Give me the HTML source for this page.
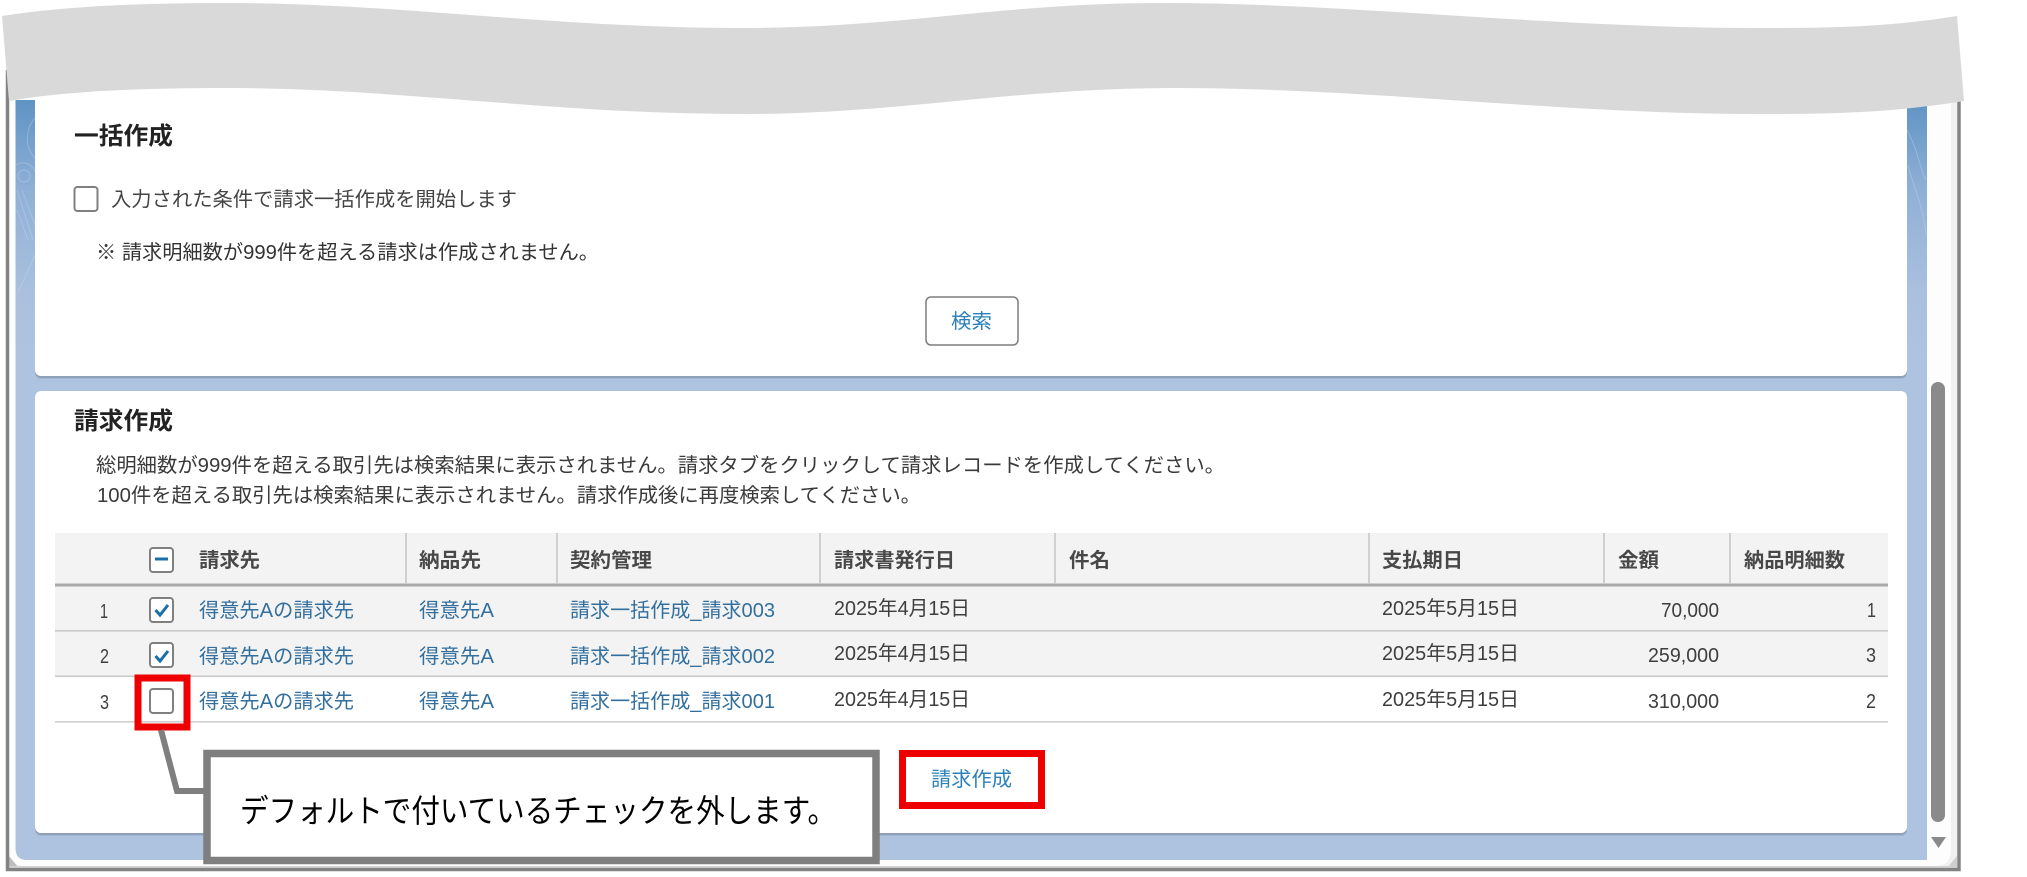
<!DOCTYPE html>
<html lang="ja">
<head>
<meta charset="utf-8">
<title>請求作成</title>
<style>
html,body{margin:0;padding:0;background:#fff;width:2027px;height:877px;overflow:hidden}
svg{display:block}
text{font-family:"Liberation Sans","Noto Sans CJK JP",sans-serif}
.t{font-size:20px;fill:#444}
.h{font-size:20px;font-weight:700;fill:#484848}
.l{font-size:20px;fill:#336f9e}
.d{font-size:20px;fill:#3e3e3e}
.ti{font-size:24px;font-weight:700;fill:#222}
.box{fill:#fff;stroke:#808080;stroke-width:2}
.sep{stroke:#c4c4c4;stroke-width:1.5}
</style>
</head>
<body>
<svg width="2027" height="877" viewBox="0 0 2027 877" xmlns="http://www.w3.org/2000/svg">
<defs>
<linearGradient id="bg" gradientUnits="userSpaceOnUse" x1="0" y1="100" x2="0" y2="861">
<stop offset="0" stop-color="#5f93c4"/>
<stop offset="0.118" stop-color="#8fb0d6"/>
<stop offset="0.25" stop-color="#a9c0de"/>
<stop offset="0.33" stop-color="#aec3df"/>
<stop offset="1" stop-color="#aec3df"/>
</linearGradient>
</defs>
<rect width="2027" height="877" fill="#fff"/>

<!-- window -->
<rect x="9" y="70" width="1948" height="797" fill="#f1f1f1"/>
<path d="M9,70 H1951 V850 Q1951,866 1935,866 H25 Q9,866 9,850 Z" fill="#fdfdfd"/>
<path d="M9,867 L9,856 L18,867 Z" fill="#bdbdbd"/>
<path d="M1957,867 L1957,856 L1948,867 Z" fill="#cfcfcf"/>
<rect x="9" y="866" width="1948" height="1.5" fill="#d2d2d2"/>
<path d="M7.5,70 V869.5 H1959 V70" fill="none" stroke="#838383" stroke-width="3.5"/>
<path d="M15.5,100 H1927 V860 H27 Q15.5,860 15.5,848 Z" fill="url(#bg)"/>

<!-- faint pattern on left / right strips -->
<g fill="none" stroke="#cfdcec" stroke-width="1" opacity=".35">
<path d="M35,118 C26,128 24,148 35,158"/>
<path d="M16,165 C24,160 33,165 35,172"/>
<circle cx="24" cy="176" r="6"/>
<path d="M17,190 L33,240M22,190 L35,225M17,210 L28,240"/>
<path d="M35,255 C28,270 22,285 18,292"/>
<path d="M1907,130 C1918,150 1920,170 1926,180"/>
<path d="M1908,165 C1914,190 1922,200 1926,235"/>
</g>

<!-- card 1 -->
<rect x="35" y="60" width="1872" height="319" rx="6" fill="#a3b6d0"/>
<rect x="35" y="60" width="1872" height="318" rx="6" fill="#8ea1b8"/>
<rect x="35" y="60" width="1872" height="316" rx="6" fill="#fff"/>
<!-- card 2 -->
<rect x="35" y="391" width="1872" height="445" rx="6" fill="#a3b6d0"/>
<rect x="35" y="391" width="1872" height="444" rx="6" fill="#8ea1b8"/>
<rect x="35" y="391" width="1872" height="442" rx="6" fill="#fff"/>

<!-- scrollbar -->
<rect x="1931" y="382" width="14" height="440" rx="7" fill="#8a8a8a"/>
<path d="M1931,837 H1946 L1938.5,848 Z" fill="#8a8a8a"/>

<!-- card 1 content -->
<text class="ti" x="74" y="144" textLength="99" lengthAdjust="spacingAndGlyphs">一括作成</text>
<rect class="box" x="74.5" y="187" width="23" height="24" rx="3"/>
<text class="t" x="111" y="206" textLength="406" lengthAdjust="spacingAndGlyphs">入力された条件で請求一括作成を開始します</text>
<text class="t" x="96" y="259" textLength="503" lengthAdjust="spacingAndGlyphs" style="fill:#333">※ 請求明細数が999件を超える請求は作成されません。</text>
<rect x="926" y="297" width="92" height="48" rx="5" fill="#fff" stroke="#7d7d7d" stroke-width="1.5"/>
<text x="951" y="328" font-size="20" fill="#2b80b9" textLength="41" lengthAdjust="spacingAndGlyphs">検索</text>

<!-- card 2 content -->
<text class="ti" x="74" y="429" textLength="99" lengthAdjust="spacingAndGlyphs">請求作成</text>
<text class="t" x="96" y="472" textLength="1129" lengthAdjust="spacingAndGlyphs" style="fill:#3a3a3a">総明細数が999件を超える取引先は検索結果に表示されません。請求タブをクリックして請求レコードを作成してください。</text>
<text class="t" x="97" y="502" textLength="824" lengthAdjust="spacingAndGlyphs" style="fill:#3a3a3a">100件を超える取引先は検索結果に表示されません。請求作成後に再度検索してください。</text>

<!-- table -->
<rect x="55" y="533" width="1833" height="51" fill="#f3f3f3"/>
<rect x="55" y="586" width="1833" height="90" fill="#f3f3f3"/>
<rect x="55" y="583.5" width="1833" height="3" fill="#a9a9a9"/>
<rect x="55" y="630" width="1833" height="1.6" fill="#c9c9c9"/>
<rect x="55" y="675.5" width="1833" height="1.6" fill="#c9c9c9"/>
<rect x="55" y="721" width="1833" height="1.6" fill="#d0d0d0"/>
<path class="sep" d="M406,533V583"/><path class="sep" d="M557,533V583"/><path class="sep" d="M820,533V583"/><path class="sep" d="M1055,533V583"/><path class="sep" d="M1369,533V583"/><path class="sep" d="M1604,533V583"/><path class="sep" d="M1730,533V583"/>

<text class="h" x="199" y="567" textLength="61" lengthAdjust="spacingAndGlyphs">請求先</text>
<text class="h" x="419" y="567" textLength="62" lengthAdjust="spacingAndGlyphs">納品先</text>
<text class="h" x="570" y="567" textLength="82" lengthAdjust="spacingAndGlyphs">契約管理</text>
<text class="h" x="834" y="567" textLength="121" lengthAdjust="spacingAndGlyphs">請求書発行日</text>
<text class="h" x="1069" y="567" textLength="41" lengthAdjust="spacingAndGlyphs">件名</text>
<text class="h" x="1382" y="567" textLength="81" lengthAdjust="spacingAndGlyphs">支払期日</text>
<text class="h" x="1618" y="567" textLength="41" lengthAdjust="spacingAndGlyphs">金額</text>
<text class="h" x="1744" y="567" textLength="101" lengthAdjust="spacingAndGlyphs">納品明細数</text>

<!-- checkboxes -->
<rect class="box" x="150" y="548" width="23" height="24" rx="3"/>
<path d="M155,559H168" stroke="#1b6ea8" stroke-width="3"/>
<rect class="box" x="150" y="598" width="23" height="24" rx="3"/>
<path d="M155.5,610L160,615L168,605" fill="none" stroke="#1b6ea8" stroke-width="3"/>
<rect class="box" x="150" y="643" width="23" height="24" rx="3"/>
<path d="M155.5,656L160,661L168,651" fill="none" stroke="#1b6ea8" stroke-width="3"/>
<rect class="box" x="150" y="689" width="23" height="24" rx="3"/>

<!-- row 1 -->
<text class="d" x="100" y="618" textLength="8" lengthAdjust="spacingAndGlyphs">1</text>
<text class="l" x="199" y="617" textLength="155" lengthAdjust="spacingAndGlyphs">得意先Aの請求先</text>
<text class="l" x="419" y="617" textLength="75" lengthAdjust="spacingAndGlyphs">得意先A</text>
<text class="l" x="570" y="617" textLength="205" lengthAdjust="spacingAndGlyphs">請求一括作成_請求003</text>
<text class="d" x="834" y="615" textLength="136" lengthAdjust="spacingAndGlyphs">2025年4月15日</text>
<text class="d" x="1382" y="615" textLength="137" lengthAdjust="spacingAndGlyphs">2025年5月15日</text>
<text class="d" x="1661" y="617" textLength="58" lengthAdjust="spacingAndGlyphs">70,000</text>
<text class="d" x="1867" y="617" textLength="9" lengthAdjust="spacingAndGlyphs">1</text>

<!-- row 2 -->
<text class="d" x="100" y="663" textLength="9" lengthAdjust="spacingAndGlyphs">2</text>
<text class="l" x="199" y="663" textLength="155" lengthAdjust="spacingAndGlyphs">得意先Aの請求先</text>
<text class="l" x="419" y="663" textLength="75" lengthAdjust="spacingAndGlyphs">得意先A</text>
<text class="l" x="570" y="663" textLength="205" lengthAdjust="spacingAndGlyphs">請求一括作成_請求002</text>
<text class="d" x="834" y="660" textLength="136" lengthAdjust="spacingAndGlyphs">2025年4月15日</text>
<text class="d" x="1382" y="660" textLength="137" lengthAdjust="spacingAndGlyphs">2025年5月15日</text>
<text class="d" x="1648" y="662" textLength="71" lengthAdjust="spacingAndGlyphs">259,000</text>
<text class="d" x="1866" y="662" textLength="10" lengthAdjust="spacingAndGlyphs">3</text>

<!-- row 3 -->
<text class="d" x="100" y="709" textLength="9" lengthAdjust="spacingAndGlyphs">3</text>
<text class="l" x="199" y="708" textLength="155" lengthAdjust="spacingAndGlyphs">得意先Aの請求先</text>
<text class="l" x="419" y="708" textLength="75" lengthAdjust="spacingAndGlyphs">得意先A</text>
<text class="l" x="570" y="708" textLength="205" lengthAdjust="spacingAndGlyphs">請求一括作成_請求001</text>
<text class="d" x="834" y="706" textLength="136" lengthAdjust="spacingAndGlyphs">2025年4月15日</text>
<text class="d" x="1382" y="706" textLength="137" lengthAdjust="spacingAndGlyphs">2025年5月15日</text>
<text class="d" x="1648" y="708" textLength="71" lengthAdjust="spacingAndGlyphs">310,000</text>
<text class="d" x="1866" y="708" textLength="10" lengthAdjust="spacingAndGlyphs">2</text>

<!-- annotations -->
<rect x="138" y="678" width="49" height="49" fill="none" stroke="#ee0000" stroke-width="7"/>
<path d="M161,730L177,791H206" fill="none" stroke="#7f7f7f" stroke-width="6"/>
<rect x="207" y="753.5" width="669" height="107" fill="#fff" stroke="#7f7f7f" stroke-width="7.5"/>
<text x="240" y="822" font-size="32" fill="#000" textLength="596" lengthAdjust="spacingAndGlyphs">デフォルトで付いているチェックを外します。</text>
<rect x="902.5" y="753.5" width="139" height="52" fill="#fff" stroke="#ee0000" stroke-width="7"/>
<text x="931" y="786" font-size="20" fill="#2b80b9" textLength="81" lengthAdjust="spacingAndGlyphs">請求作成</text>

<!-- gray wavy cut -->
<path d="M2,16 C60,7 130,3 226,3 C400,3 550,28 744,28 C900,28 1000,3 1163,3 C1350,3 1550,28 1758,28 C1830,28 1890,27 1957,16 L1964,101 C1890,113 1830,114 1758,114 C1560,114 1370,88 1176,88 C1010,88 900,114 744,114 C550,114 400,88 226,88 C130,88 60,92 9,101 Z" fill="#d9d9d9"/>
</svg>
</body>
</html>
